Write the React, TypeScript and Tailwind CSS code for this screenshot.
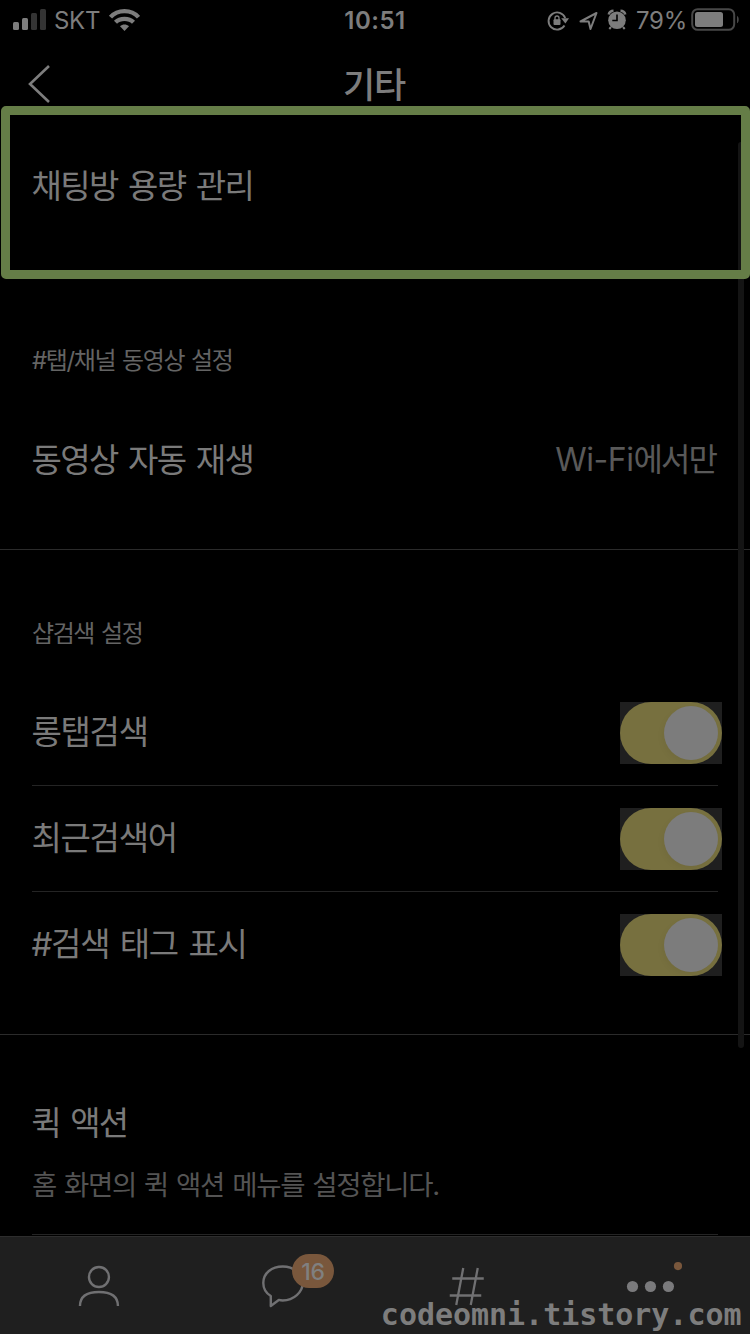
import React from "react";

const tightText = "tracking-[-1.6px] [word-spacing:2.6px]";

const searchOptions = [
  { label: "롱탭검색", on: true },
  { label: "최근검색어", on: true },
  { label: "#검색 태그 표시", on: true },
];

const StatusBar: React.FC = () => (
  <div className="flex h-10 items-center justify-between text-2xl leading-10 text-[#7d7d7d]">
    <div className="flex w-[250px] items-center pl-[13px]">
      <svg width="34" height="40" viewBox="0 0 34 40">
        <rect x="0" y="22" width="6" height="8" rx="1.5" fill="#7d7d7d" />
        <rect x="9" y="18" width="6" height="12" rx="1.5" fill="#7d7d7d" />
        <rect x="18" y="13" width="6" height="17" rx="1.5" fill="#343434" />
        <rect x="27" y="9" width="6" height="21" rx="1.5" fill="#343434" />
      </svg>
      <span className="ml-[7px] w-[46px] pt-px text-[24px] tracking-[-0.3px]">SKT</span>
      <svg className="ml-[8px]" width="32" height="40" viewBox="0 0 32 40" fill="none" stroke="#7d7d7d" strokeWidth="4.2">
        <path d="M2.5 17.2C9.6 9.1 23.4 9.1 30.5 17.2" />
        <path d="M7.5 22.3C12 17.6 21 17.6 25.5 22.3" />
        <path d="M16.5 31L12 26.3C14.5 24 18.5 24 21 26.3Z" fill="#7d7d7d" stroke="none" />
      </svg>
    </div>
    <span className="pt-[2px] text-[24px] font-semibold tracking-[0.5px]">10:51</span>
    <div className="flex w-[250px] items-center justify-end pr-[10px]">
      <svg width="80" height="40" viewBox="0 0 80 40">
        <path d="M17.5 25.5A8.6 8.6 0 1 1 18.2 18" fill="none" stroke="#7d7d7d" strokeWidth="1.9" />
        <path d="M14.2 18.2H22L18.4 23.4Z" fill="#7d7d7d" />
        <rect x="6.5" y="19.3" width="7" height="5.8" rx="1" fill="#7d7d7d" />
        <path d="M8 20V18a2 2 0 0 1 4 0V20" fill="none" stroke="#7d7d7d" strokeWidth="1.3" />
        <path d="M33.5 21.5L49.5 13L43.5 29L41.7 21.6Z" fill="none" stroke="#7d7d7d" strokeWidth="2" strokeLinejoin="round" />
        <circle cx="70" cy="20.3" r="8.8" fill="#7d7d7d" />
        <path d="M61.7 14.5A5 5 0 0 1 66.5 10.8M73.5 10.8A5 5 0 0 1 78.3 14.5" stroke="#7d7d7d" strokeWidth="2.5" fill="none" />
        <path d="M64 27L62.3 29M76 27L77.7 29" stroke="#7d7d7d" strokeWidth="2" />
        <path d="M70 14.5V20.5H65.3" stroke="#000" strokeWidth="1.6" fill="none" />
      </svg>
      <span className="ml-[9px] w-[51px] pt-[2px] text-[24px] whitespace-nowrap tracking-[-0.3px]">79%</span>
      <svg className="ml-[4px]" width="49" height="40" viewBox="0 0 49 40">
        <rect x="1.2" y="9.2" width="42" height="20.6" rx="5.5" fill="none" stroke="#484848" strokeWidth="2" />
        <rect x="4" y="12" width="28" height="15" rx="2.5" fill="#7d7d7d" />
        <path d="M46 15.7C48.3 17 48.3 22 46 23.3Z" fill="#484848" />
      </svg>
    </div>
  </div>
);

const Header: React.FC = () => (
  <header className="flex h-[66px] items-center">
    <svg className="ml-[27px]" width="24" height="66" viewBox="0 0 24 66">
      <path d="M22 26L3 44L22 62" fill="none" stroke="#7d7d7d" strokeWidth="2.6" />
    </svg>
    <h1 className="mr-[53px] flex-1 pt-[24px] text-center text-[35px] leading-[45px] font-medium tracking-[-1.2px] text-[#7d7d7d]">
      기타
    </h1>
  </header>
);

const Toggle: React.FC<{ on: boolean }> = ({ on }) => (
  <div className="h-[62px] w-[102px] bg-[#1f1f1f]">
    <div className={`flex h-full items-center rounded-full bg-[#77703f] px-1 ${on ? "justify-end" : "justify-start"}`}>
      <span className="h-[54px] w-[54px] rounded-full bg-[#7c7c7c] shadow-[-2px_3px_6px_rgba(0,0,0,0.04)]" />
    </div>
  </div>
);

const SectionTitle: React.FC<{ children: React.ReactNode }> = ({ children }) => (
  <h2 className="text-[24px] leading-9 tracking-[-1.4px] text-[#646464] [word-spacing:1.6px]">{children}</h2>
);

const TabBar: React.FC = () => (
  <nav className="relative grid h-[98px] grid-cols-4 border-t border-[#2d2d2d] bg-[#1f1f1f]">
    <svg className="h-[97px] w-full" viewBox="0 0 187 97" fill="none" stroke="#707072" strokeWidth="2.4">
      <circle cx="98.7" cy="40" r="10" />
      <path d="M79.7 69C79.7 59 87.7 55 98.7 55S117.7 59 117.7 69" />
    </svg>
    <div className="relative">
      <svg className="h-[97px] w-full" viewBox="188 0 188 97" fill="none" stroke="#707072" strokeWidth="2.4">
        <path d="M271 69V59C266 56 263.5 51 263.5 46C263.5 36 272 29.5 283 29.5S303 37 303 46S294 63.5 283 63.5C281.5 63.5 280.5 63.4 279 63Z" strokeLinejoin="round" />
      </svg>
      <span className="absolute top-[17px] left-[104.5px] h-[34px] w-[42px] rounded-full bg-[#79573c] text-center text-[23px] leading-[36px] tracking-[-0.2px] font-medium text-[#808080]">
        16
      </span>
    </div>
    <svg className="h-[97px] w-full" viewBox="375.5 0 187 97" fill="none" stroke="#707072" strokeWidth="2.3">
      <path d="M463.5 31L456.5 68M478 31L471 68M452.5 41.5H484M450 58.5H481.5" />
    </svg>
    <svg className="h-[97px] w-full" viewBox="562.7 0 188 97" fill="#7a7a7c">
      <circle cx="632.4" cy="49.5" r="5.6" />
      <circle cx="650.4" cy="49.5" r="5.6" />
      <circle cx="668.4" cy="49.5" r="5.6" />
      <circle cx="678" cy="29" r="4.1" fill="#79573c" />
    </svg>
    <span className="absolute right-[8.5px] bottom-px font-['DejaVu_Sans_Mono',monospace] text-[30px] leading-[37px] font-bold tracking-[-0.03px] text-[#7d7d7d]">
      codeomni.tistory.com
    </span>
  </nav>
);

const App: React.FC = () => {
  return (
    <div className="relative flex h-[1334px] w-[750px] flex-col overflow-hidden bg-black font-['Inter','Noto_Sans_CJK_KR',sans-serif] whitespace-nowrap">
      <StatusBar />
      <Header />

      {/* scroll indicator */}
      <div className="absolute top-[142px] left-[738px] h-[906px] w-1.5 rounded-full bg-[#141414]" />

      <main className={`flex-1 text-[33px] leading-[48px] text-[#7a7a7a] ${tightText}`}>
        <section className="relative ml-px h-[173px] rounded-[5px] border-9 border-[#657d47] pt-[47px] pl-[21.5px]">
          채팅방 용량 관리
        </section>

        <section className="h-[271px] border-b border-[#2b2b2b] px-8 pt-[64px]">
          <SectionTitle>#탭/채널 동영상 설정</SectionTitle>
          <div className="mt-[56px] flex items-center justify-between">
            <span className="-ml-[0.5px]">동영상 자동 재생</span>
            <span className="mr-[2px] pt-px text-[32px] tracking-[-1.9px] text-[#595959]">
              <span className="tracking-[-0.5px]">Wi-Fi</span>에서만
            </span>
          </div>
        </section>

        <section className="h-[485px] border-b border-[#2b2b2b] pt-[66px] pl-8">
          <SectionTitle>샵검색 설정</SectionTitle>
          <div className="mt-[28px]">
            {searchOptions.map(({ label, on }, index) => (
              <div
                key={label}
                className={`mr-8 flex h-[106px] items-center justify-between ${index < 2 ? "border-b border-[#242424]" : ""}`}
              >
                <span className="-ml-[0.5px] pb-[2px] tracking-[-1.3px]">{label}</span>
                <div className="-mr-1">
                  <Toggle on={on} />
                </div>
              </div>
            ))}
          </div>
        </section>

        <section className="mr-8 ml-8 h-[200px] border-b border-[#242424] pt-[64px]">
          <h2 className="-ml-[0.5px] tracking-[-1.8px]">퀵 액션</h2>
          <p className="mt-[18px] text-[27.5px] leading-10 tracking-[-1.3px] text-[#545454] [word-spacing:1.6px]">
            홈 화면의 퀵 액션 메뉴를 설정합니다.
          </p>
        </section>
      </main>

      <TabBar />
    </div>
  );
};

export default App;
